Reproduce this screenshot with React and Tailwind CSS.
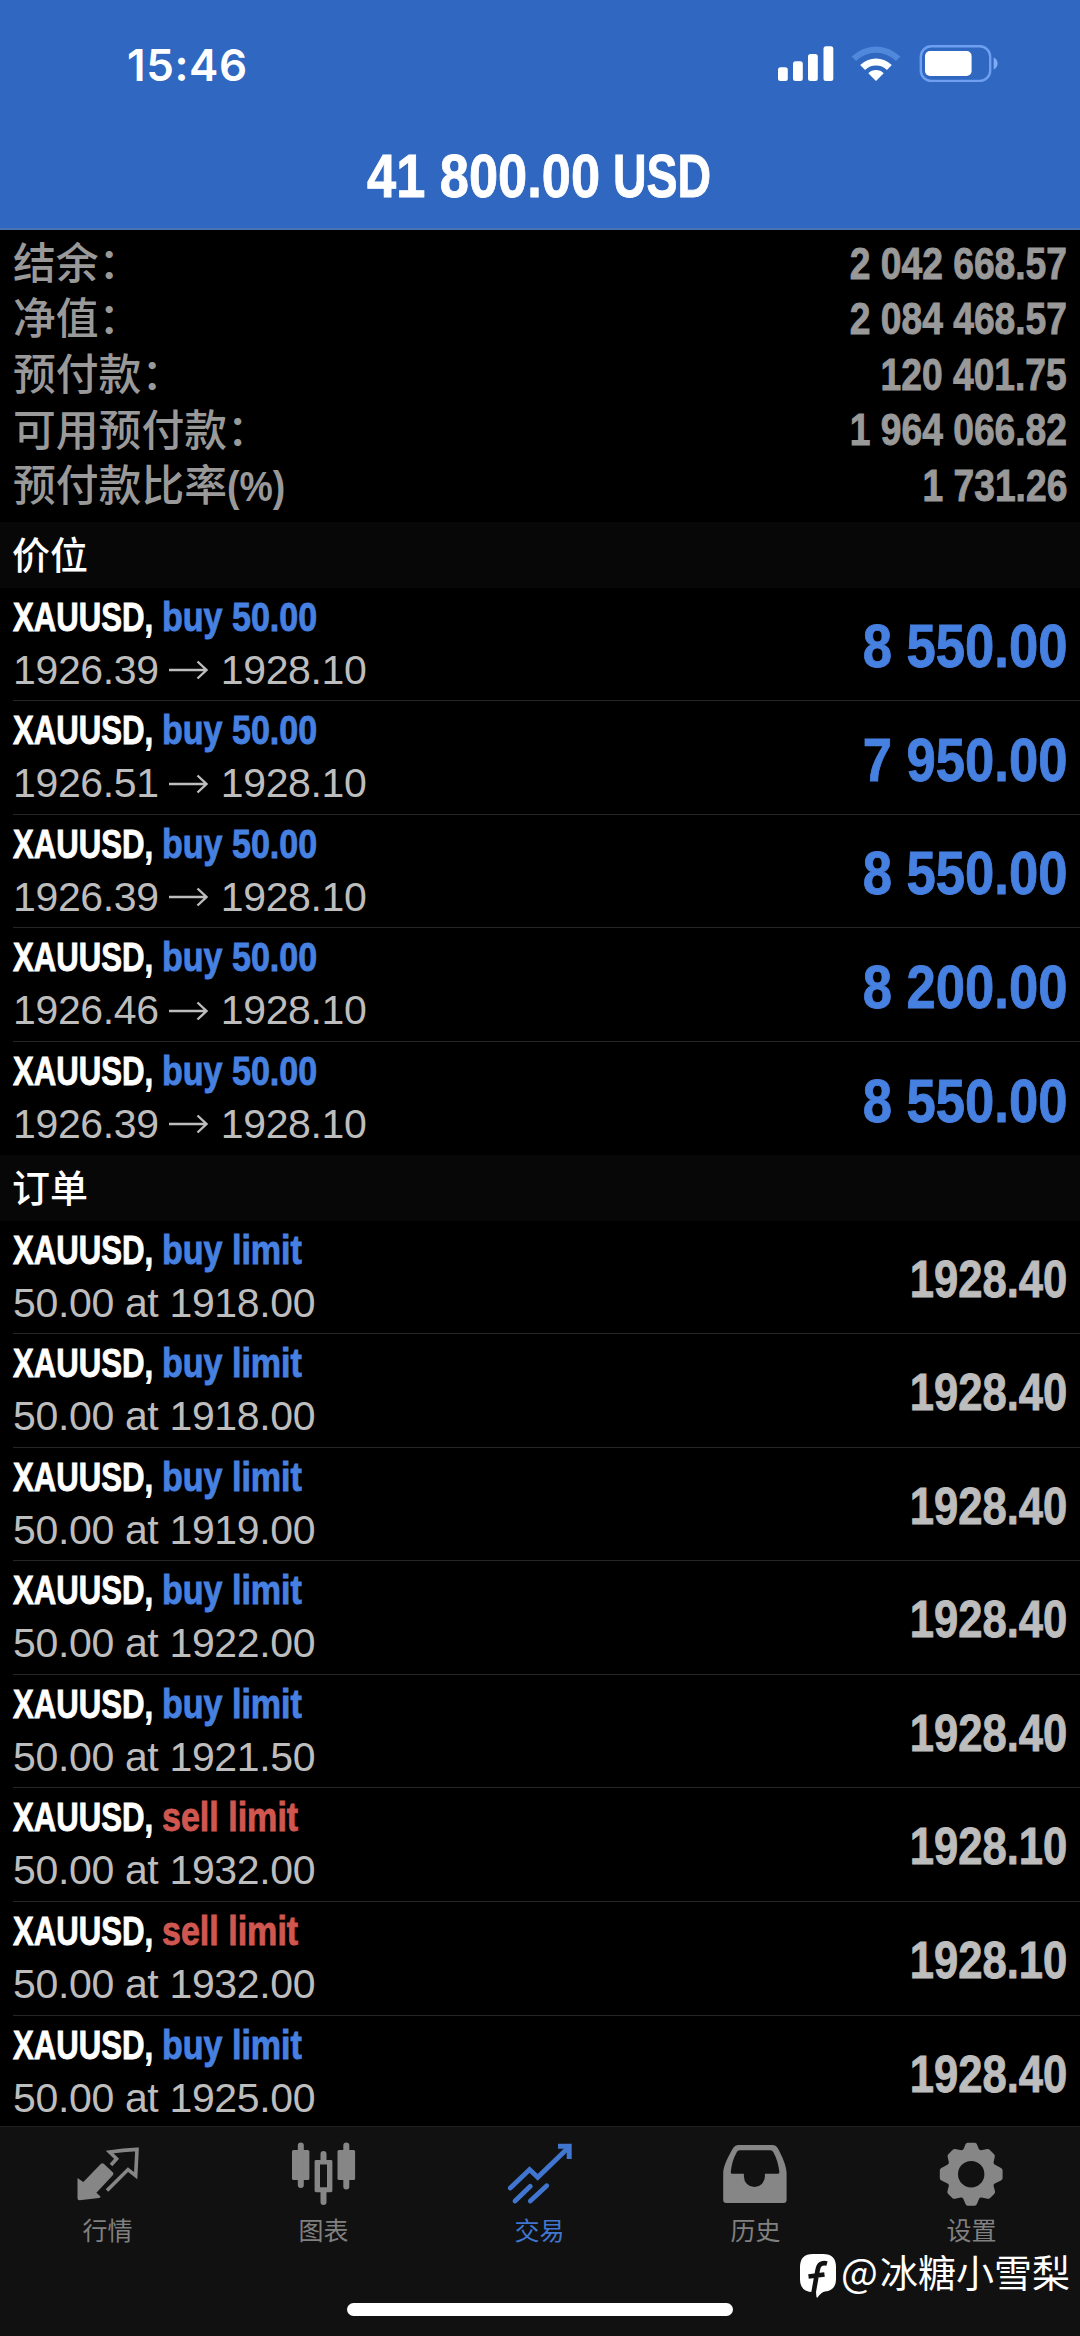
import React from "react";

const latin = "font-['Liberation_Sans','Noto_Sans_CJK_SC',sans-serif]";
const heavy = "font-bold [-webkit-text-stroke:0.9px_currentColor]";

const account = [
  ["结余：", "", "2 042 668.57"],
  ["净值：", "", "2 084 468.57"],
  ["预付款：", "", "120 401.75"],
  ["可用预付款：", "", "1 964 066.82"],
  ["预付款比率", "(%)", "1 731.26"],
];

const positions = [
  ["1926.39", "8 550.00"],
  ["1926.51", "7 950.00"],
  ["1926.39", "8 550.00"],
  ["1926.46", "8 200.00"],
  ["1926.39", "8 550.00"],
];

const orders = [
  ["buy", "1918.00", "1928.40"],
  ["buy", "1918.00", "1928.40"],
  ["buy", "1919.00", "1928.40"],
  ["buy", "1922.00", "1928.40"],
  ["buy", "1921.50", "1928.40"],
  ["sell", "1932.00", "1928.10"],
  ["sell", "1932.00", "1928.10"],
  ["buy", "1925.00", "1928.40"],
];

function StatusIcons() {
  return (
    <svg className="h-[40px] w-[224px]" viewBox="776 44 224 40" fill="#fff">
      <rect x="778" y="67.3" width="9.8" height="13.6" rx="2.5" />
      <rect x="793" y="61.3" width="9.8" height="19.6" rx="2.5" />
      <rect x="808" y="54" width="9.8" height="26.9" rx="2.5" />
      <rect x="823.5" y="46.3" width="9.8" height="34.6" rx="2.5" />
      <path d="M851.6 56.6a34.6 34.6 0 0 1 48.8 0l-4.4 4.4a28.4 28.4 0 0 0-40 0z" fill="#5088dc" />
      <path d="M860.2 65.1a22.4 22.4 0 0 1 31.6 0l-4.9 4.9a15.5 15.5 0 0 0-21.8 0z" />
      <path d="M868.3 73.2a11 11 0 0 1 15.4 0l-7.7 7.8z" />
      <rect x="920.8" y="46.3" width="69.4" height="34.6" rx="10.5" fill="none" stroke="#6e9ff0" strokeWidth="2.4" />
      <rect x="925" y="51" width="46.6" height="25" rx="5" />
      <path d="M993.6 57.6c5.4 2.4 5.4 9.6 0 12z" fill="#7fabf2" />
    </svg>
  );
}

function SectionTitle({ children }) {
  return (
    <div className="flex h-[65.5px] shrink-0 items-center bg-[#070707] pt-[2px] pl-[12px] text-[38px] font-medium leading-none text-white">
      {children}
    </div>
  );
}

function Row({ side, action, value, valueClass, last, children }) {
  return (
    <div className="flex h-[113.55px] shrink-0 pl-[13px]">
      <div className={`flex w-full justify-between pr-[13px] ${last ? "" : "border-b-[1.5px] border-[#262628]"}`}>
        <div className="flex flex-col whitespace-pre pt-[3px] text-[41px] leading-[53px]">
          <div className={`flex h-[53px] ${heavy}`}>
            <span className="w-[149px] origin-left scale-x-[.76] text-white">XAUUSD,</span>
            <span className={`origin-left scale-x-[.83] ${side === "sell" ? "text-[#d0574f]" : "text-[#4680e0]"}`}>{action}</span>
          </div>
          <div className="flex h-[53px] items-center tracking-[-0.35px] text-[#bdbdbd]">{children}</div>
        </div>
        <div className={`flex items-center whitespace-pre pt-[4px] leading-none ${heavy} ${valueClass}`}>
          <span className="origin-right scale-x-[.855]">{value}</span>
        </div>
      </div>
    </div>
  );
}

function QuotesIcon() {
  return (
    <svg className="size-[72px]" viewBox="0 0 72 72" fill="#868686">
      <path d="M5.5 42L11.3 46L29 27.8Q30.5 26.5 32 28L41 36.5Q42 38 40.8 39.3L24.4 56.8L28.5 60.5Q28.5 61.7 27 61.9L7.5 64.2Q5.5 64.2 5.5 62.3Z" />
      <path d="M39 29L44.6 22.8L37.6 16Q51 14 65 13.4L63.7 39.6L56 33.6L35 54.6" fill="none" stroke="#868686" strokeWidth="3.6" />
    </svg>
  );
}

function ChartIcon() {
  return (
    <svg className="size-[72px]" viewBox="0 0 72 72" fill="#868686">
      <rect x="4" y="14" width="17.4" height="30" rx="1.5" />
      <rect x="9.8" y="6.5" width="6" height="45.5" rx="3" />
      <path fillRule="evenodd" d="M28 24h15q1.4 0 1.4 1.4v29.4q0 1.4-1.4 1.4H28q-1.4 0-1.4-1.4V25.4q0-1.4 1.4-1.4zM32 28.5v22.8h7V28.5z" />
      <path d="M32.5 25V18a3 3 0 0 1 6 0v7zM32.5 55v11a3 3 0 0 0 6 0V55z" />
      <rect x="49.5" y="14" width="17.6" height="30" rx="1.5" />
      <rect x="55.3" y="6.5" width="6" height="47" rx="3" />
    </svg>
  );
}

function TradeIcon() {
  return (
    <svg className="size-[72px]" viewBox="0 0 72 72" fill="none" stroke="#4076d0" strokeWidth="4.8" strokeLinecap="round">
      <path d="M6.3 52L25.6 33.5L33.7 41.3L64 12" />
      <path d="M54 10.3H65.2V23" strokeWidth="5" strokeLinecap="butt" />
      <path d="M11 65L26.3 50.3M26.3 65L42.7 49.7" />
    </svg>
  );
}

function HistoryIcon() {
  return (
    <svg className="size-[72px]" viewBox="0 0 72 72" fill="#868686">
      <path
        fillRule="evenodd"
        d="M18 9H53Q56 9 57.3 11.5C62 19.5 66.6 30 66.6 37V64Q66.6 67 63.6 67H6.2Q3.2 67 3.2 64V37C3.2 30 8.6 19.5 13.5 11.5Q15 9 18 9ZM20 14.3Q17.5 14.3 16.6 16.5C13 23 11.5 29 10.8 36Q10.7 37.7 12.3 37.7H23.9V40.5A10.5 10.5 0 0 0 44.9 40.5V37.7H58Q59.5 37.7 59.4 36C58.5 29 57 23 53.5 16.5Q52.5 14.3 50 14.3Z"
      />
    </svg>
  );
}

function SettingsIcon() {
  return (
    <svg className="size-[72px]" viewBox="0 0 72 72" fill="#868686">
      <path
        fillRule="evenodd"
        d="M35.2 25a13.2 13.2 0 1 0 0 26.4a13.2 13.2 0 1 0 0-26.4z M31.5 6.7h7.4q1.5 0 2 1.5l1.8 4.6q.6 1.5 2.2 1.4l6.4-1.2q1.5-.1 2.6.9l4 4q1.2 1.2.9 2.8l-1.2 5.3q-.4 1.7 1 2.6l6.4 3.3q1.6.8 1.6 2.5v7.6q0 1.7-1.6 2.5l-6.2 2.9q-1.6.8-1.2 2.5l1.4 5.3q.3 1.6-.8 2.8l-4.1 4q-1.1 1.1-2.7.8l-5.8-1.3q-1.7-.3-2.5 1.2l-2.2 5.3q-.7 1.7-2.2 1.7h-7q-1.5 0-2.2-1.7l-2.2-5.3q-.8-1.5-2.5-1.2l-5.8 1.3q-1.6.3-2.7-.8l-4.1-4q-1.1-1.2-.8-2.8l1.4-5.3q.4-1.7-1.2-2.5l-6.2-2.9q-1.6-.8-1.6-2.5v-7.6q0-1.7 1.6-2.5l6.4-3.3q1.4-.9 1-2.6l-1.2-5.3q-.3-1.6.9-2.8l4-4q1.1-1 2.6-.9l6.4 1.2q1.6.1 2.2-1.4l1.8-4.6q.5-1.5 2-1.5z"
      />
    </svg>
  );
}

const tabs = [
  ["行情", QuotesIcon],
  ["图表", ChartIcon],
  ["交易", TradeIcon],
  ["历史", HistoryIcon],
  ["设置", SettingsIcon],
];

function Watermark() {
  return (
    <div className="absolute right-[10px] bottom-[34px] flex h-[56px] items-center">
      <svg className="mt-[4px] h-[46px] w-[38px]" viewBox="0 0 38 46">
        <path d="M14 1H24Q37 1 37 14V26Q37 37.5 26 38.5Q22.5 39 18.5 44.5Q17.6 45 17.4 43.5L17 39H14Q1 39 1 26V14Q1 1 14 1Z" fill="#fff" />
        <path d="M28 10.5C22.5 9 19.5 11.5 18.5 17.5L14.5 40M9.5 23.5L25.5 21.5" fill="none" stroke="#111" strokeWidth="4.6" />
      </svg>
      <span className="mb-[7px] ml-[4px] w-[39px] font-['Noto_Sans_CJK_SC',sans-serif] text-[39px] leading-none text-white">@</span>
      <span className="text-[38px] leading-none text-white">冰糖小雪梨</span>
    </div>
  );
}

export default function App() {
  return (
    <div className={`relative flex h-[2336px] w-[1080px] flex-col overflow-hidden bg-black ${latin}`}>
      <header className="flex h-[230px] shrink-0 flex-col border-b-2 border-[#4a72b4] bg-[#2f67c1] text-white">
        <div className="flex h-[128px] items-center justify-between pr-[80px] pl-[127px]">
          <span className="pt-[2px] font-['Inter',sans-serif] text-[44px] font-semibold leading-none tracking-[0.6px]">15:46</span>
          <StatusIcons />
        </div>
        <div className={`flex h-[96px] items-center whitespace-pre pl-[367px] text-[62px] leading-none ${heavy}`}>
          <span className="w-[246px] origin-left scale-x-[.845]">41 800.00</span>
          <span className="origin-left scale-x-[.75]">USD</span>
        </div>
      </header>

      <section className="flex h-[292px] shrink-0 flex-col pt-[6.5px] pr-[13px] pl-[13px] text-[#999999]">
        {account.map(([label, suffix, value]) => (
          <div key={label} className="flex h-[55.6px] items-center justify-between whitespace-pre leading-none">
            <div className="flex items-center">
              <span className="text-[42.8px] font-medium">{label}</span>
              <span className="origin-left scale-x-[.87] text-[43px] font-bold">{suffix}</span>
            </div>
            <span className={`origin-right scale-x-[.855] text-[43.5px] ${heavy}`}>{value}</span>
          </div>
        ))}
      </section>

      <SectionTitle>价位</SectionTitle>
      {positions.map(([open, profit], i) => (
        <Row key={i} side="buy" action="buy 50.00" value={profit} valueClass="text-[61.5px] text-[#4680e0]" last={i === positions.length - 1}>
          <span>{open}</span>
          <svg className="mr-[13px] ml-[10px] h-[20px] w-[39px]" viewBox="0 0 39 20" fill="none" stroke="#bdbdbd" strokeWidth="2.4">
            <path d="M0 10H37M28.5 1.5L37.5 10L28.5 18.5" />
          </svg>
          <span>1928.10</span>
        </Row>
      ))}

      <SectionTitle>订单</SectionTitle>
      <div className="flex h-[905px] shrink-0 flex-col overflow-hidden">
        {orders.map(([side, price, current], i) => (
          <Row key={i} side={side} action={`${side} limit`} value={current} valueClass="text-[51px] text-[#bdbdbd]" last={i === orders.length - 1}>
            <span>50.00 at {price}</span>
          </Row>
        ))}
      </div>

      <nav className="relative flex grow flex-col border-t border-[#1e1e1e] bg-[#111111]">
        <div className="grid grid-cols-5">
          {tabs.map(([name, Icon]) => (
            <div key={name} className={`flex flex-col items-center pt-[9px] ${name === "交易" ? "text-[#4076d0]" : "text-[#808080]"}`}>
              <Icon />
              <span className="mt-[11px] mr-[1px] text-[25px] leading-none">{name}</span>
            </div>
          ))}
        </div>
        <div className="mt-auto mb-[20px] h-[13px] w-[386px] self-center rounded-full bg-white" />
        <Watermark />
      </nav>
    </div>
  );
}
